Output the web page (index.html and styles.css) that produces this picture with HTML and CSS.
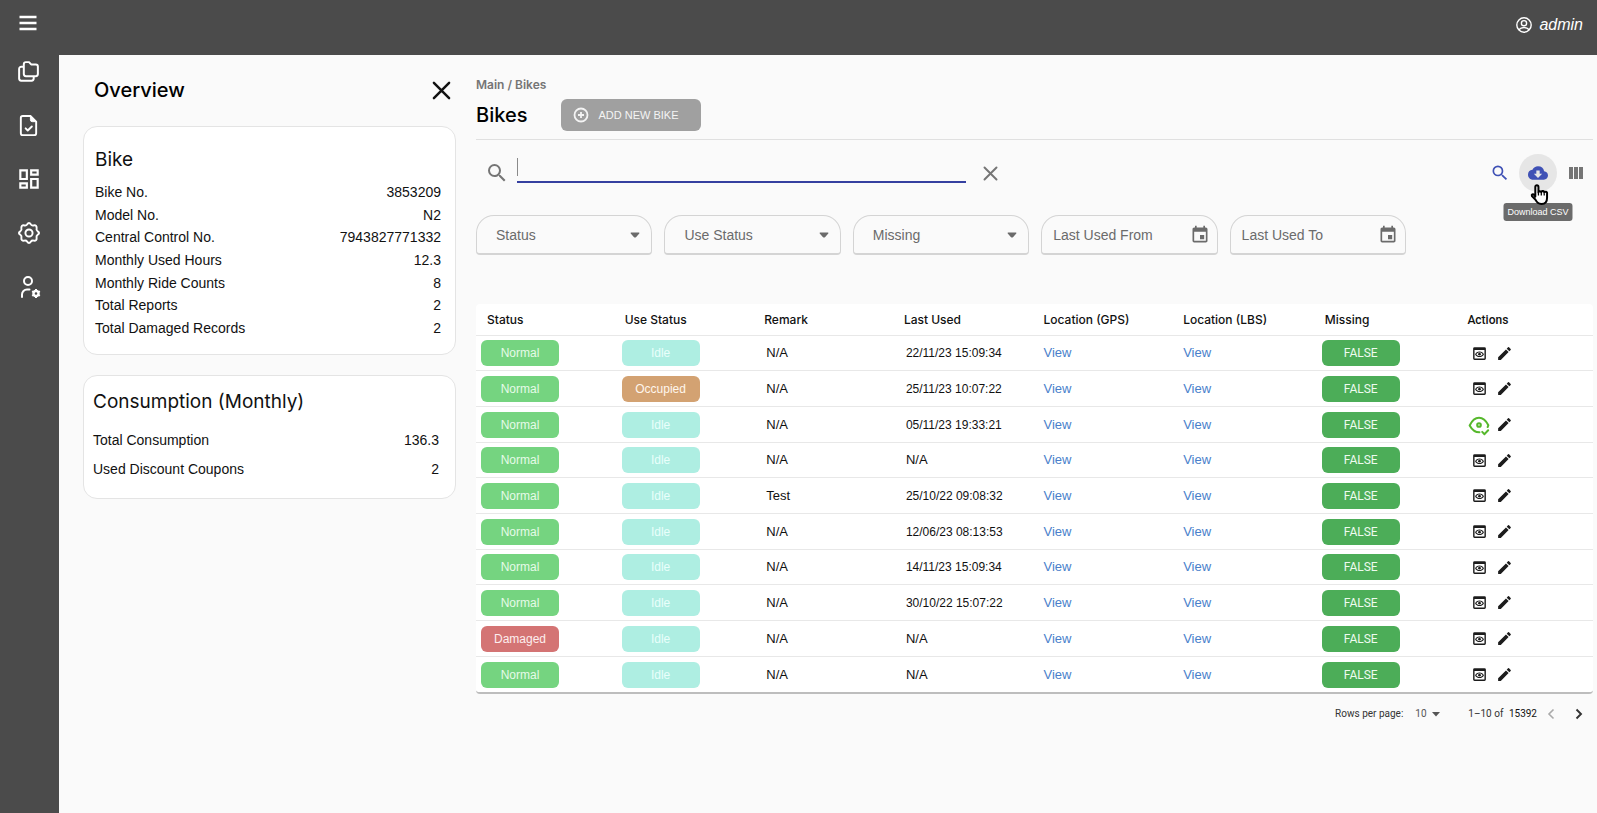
FILE: index.html
```html
<!DOCTYPE html>
<html lang="en">
<head>
<meta charset="utf-8">
<meta name="viewport" content="width=device-width, initial-scale=1">
<title>Bikes</title>
<link rel="stylesheet" href="styles.css">
</head>
<body>
<svg class="sprite" aria-hidden="true">
  <symbol id="i-close" viewBox="0 0 20 20"><path d="M2 2l16 16M18 2L2 18" fill="none" stroke="currentColor" stroke-width="2.6" stroke-linecap="round"/></symbol>
  <symbol id="i-search" viewBox="0 0 24 24"><path fill="currentColor" d="M15.5 14h-.79l-.28-.27A6.47 6.47 0 0 0 16 9.5 6.5 6.5 0 1 0 9.5 16c1.61 0 3.09-.59 4.23-1.57l.27.28v.79l5 4.99L20.49 19l-4.99-5zm-6 0C7.01 14 5 11.99 5 9.5S7.01 5 9.5 5 14 7.01 14 9.5 11.99 14 9.5 14z"/></symbol>
  <symbol id="i-drop" viewBox="0 0 10 6"><path fill="currentColor" d="M1.200 0.600h7.600q1 0 .5.900L6.200 4.900q-1.200 1-2.400 0L.7 1.500q-.5-.9.500-.9z"/></symbol>
  <symbol id="i-event" viewBox="0 0 24 24"><path fill="currentColor" d="M17 12h-5v5h5v-5zM16 1v2H8V1H6v2H5c-1.110 0-1.990.9-1.990 2L3 19a2 2 0 0 0 2 2h14c1.100 0 2-.9 2-2V5c0-1.100-.9-2-2-2h-1V1h-2zm3 18H5V8h14v11z"/></symbol>
  <symbol id="i-preview" viewBox="0 0 24 24"><path fill="currentColor" fill-rule="evenodd" d="M5 3h14a2 2 0 0 1 2 2v14a2 2 0 0 1-2 2H5a2 2 0 0 1-2-2V5a2 2 0 0 1 2-2zM5 7v12h14V7zM12 9c3 0 5.200 1.600 6.300 4-1.100 2.400-3.300 4-6.300 4s-5.200-1.600-6.300-4C6.800 10.600 9 9 12 9zm0 1.500c-2 0-3.500.9-4.500 2.500 1 1.600 2.500 2.500 4.500 2.500s3.500-.9 4.500-2.500c-1-1.600-2.500-2.500-4.500-2.500z"/><circle cx="12" cy="13" r="1.900" fill="currentColor"/></symbol>
  <symbol id="i-edit" viewBox="0 0 24 24"><path fill="currentColor" d="M3 17.250V21h3.750L17.810 9.940l-3.750-3.750L3 17.250zM20.710 7.040a1 1 0 0 0 0-1.410l-2.340-2.340a1 1 0 0 0-1.410 0l-1.830 1.830 3.750 3.750 1.830-1.830z"/></symbol>
  <symbol id="i-eye-check" viewBox="0 0 24 24"><g fill="none" stroke="currentColor" stroke-width="2.2" stroke-linecap="round" stroke-linejoin="round"><circle cx="12" cy="12" r="2"/><path d="M12.500 20c-4.200 0-8-2.600-10.700-7.500C4.300 7.200 7.800 4 12 4s7.700 3.200 10.200 8.200l-.8 2"/><path d="M15.500 19.500l2.500 2.500 4-4.300"/></g></symbol>
</svg>

<header class="topbar">
  <button class="icon-btn menu" aria-label="Menu"><svg width="18" height="16" viewBox="0 0 18 16"><path d="M.5 2h17M.5 8h17M.5 14h17" stroke="currentColor" stroke-width="2.600"/></svg></button>
  <a class="user" href="#">
    <svg width="16" height="16" viewBox="0 0 16 16" fill="none" stroke="currentColor" stroke-width="1.400"><circle cx="8" cy="8" r="7.200"/><circle cx="8" cy="6.200" r="2.600"/><path d="M2.800 12.800c1.400-1.600 3-2.300 5.200-2.300s3.800.7 5.200 2.300"/></svg>
    <span>admin</span>
  </a>
</header>

<div class="shell">
  <nav class="sidebar" aria-label="Main navigation">
    <a href="#" aria-label="Folders"><svg width="25" height="25" viewBox="0 0 24 24" fill="none" stroke="currentColor" stroke-width="1.900" stroke-linejoin="round"><path d="M9.500 3h3l2 2.200H19a2 2 0 0 1 2 2v7.300a2 2 0 0 1-2 2H9.500a2 2 0 0 1-2-2V5a2 2 0 0 1 2-2z"/><path d="M17 16.500v2.300a2 2 0 0 1-2 2H5a2 2 0 0 1-2-2V9.500a2 2 0 0 1 2-2h2.500"/></svg></a>
    <a href="#" aria-label="Reports"><svg width="23" height="23" viewBox="0 0 24 24" fill="none" stroke="currentColor" stroke-width="2" stroke-linejoin="round" stroke-linecap="round"><path d="M14 2H6a2 2 0 0 0-2 2v16a2 2 0 0 0 2 2h12a2 2 0 0 0 2-2V8z"/><path d="M14 2v4a2 2 0 0 0 2 2h4z" fill="currentColor" stroke-width="1"/><path d="M9 15l2.200 2.200L15.500 13"/></svg></a>
    <a href="#" aria-label="Dashboard"><svg width="26" height="26" viewBox="0 0 24 24" fill="currentColor"><path d="M19 5v2h-4V5h4M9 5v6H5V5h4m10 8v6h-4v-6h4M9 17v2H5v-2h4M21 3h-8v6h8V3zM11 3H3v10h8V3zm10 8h-8v10h8V11zm-10 4H3v6h8v-6z"/></svg></a>
    <a href="#" aria-label="Settings"><svg width="26" height="26" viewBox="0 0 24 24" fill="none" stroke="currentColor" stroke-width="1.800" stroke-linejoin="round"><path d="M10.200 4.200 Q12 1.200 13.800 4.200 Q14.600 5.400 16.200 5 Q19.500 4.500 19 7.800 Q18.600 9.400 19.800 10.200 Q22.800 12 19.800 13.800 Q18.600 14.600 19 16.200 Q19.500 19.500 16.200 19 Q14.600 18.600 13.800 19.800 Q12 22.800 10.200 19.800 Q9.400 18.600 7.800 19 Q4.500 19.500 5 16.200 Q5.400 14.600 4.200 13.800 Q1.200 12 4.200 10.200 Q5.400 9.400 5 7.800 Q4.500 4.500 7.800 5 Q9.400 5.400 10.200 4.200z"/><circle cx="12" cy="12" r="3.300"/></svg></a>
    <a href="#" aria-label="User management"><svg width="24" height="24" viewBox="0 0 24 24" fill="none" stroke="currentColor" stroke-width="2"><circle cx="11" cy="6" r="4"/><path d="M5 22v-2.500a5 5 0 0 1 5-5h2.500" stroke-linecap="round"/><circle cx="19" cy="18.500" r="2.500" stroke-width="2.400"/><path d="M19 14v2M19 21v2M15.100 16.250l1.800 1M21.100 19.750l1.800 1M15.100 20.750l1.800-1M21.100 17.250l1.800-1"/></svg></a>
  </nav>

  <aside class="overview">
    <div class="overview-head">
      <h2>Overview</h2>
      <button class="icon-btn" aria-label="Close overview"><svg width="19" height="19"><use href="#i-close"/></svg></button>
    </div>
    <section class="card">
      <h3>Bike</h3>
      <dl class="facts facts-bike">
        <div><dt>Bike No.</dt><dd>3853209</dd></div>
        <div><dt>Model No.</dt><dd>N2</dd></div>
        <div><dt>Central Control No.</dt><dd>7943827771332</dd></div>
        <div><dt>Monthly Used Hours</dt><dd>12.3</dd></div>
        <div><dt>Monthly Ride Counts</dt><dd>8</dd></div>
        <div><dt>Total Reports</dt><dd>2</dd></div>
        <div><dt>Total Damaged Records</dt><dd>2</dd></div>
      </dl>
    </section>
    <section class="card card-consumption">
      <h3>Consumption (Monthly)</h3>
      <dl class="facts facts-wide">
        <div><dt>Total Consumption</dt><dd>136.3</dd></div>
        <div><dt>Used Discount Coupons</dt><dd>2</dd></div>
      </dl>
    </section>
  </aside>

  <main class="main">
    <nav class="crumbs" aria-label="Breadcrumb"><a href="#">Main</a> / <a href="#">Bikes</a></nav>
    <div class="title-row">
      <h1>Bikes</h1>
      <button class="add-btn"><svg width="16" height="16" viewBox="0 0 16 16" fill="none" stroke="currentColor"><circle cx="8" cy="8" r="6.500" stroke-width="1.800"/><path d="M8 5v6M5 8h6" stroke-width="1.800"/></svg>ADD NEW BIKE</button>
    </div>

    <div class="toolbar">
      <form class="search" role="search">
        <svg class="muted" width="24" height="24" aria-hidden="true"><use href="#i-search"/></svg>
        <span class="search-field"><input type="text" aria-label="Search bikes"></span>
        <button class="icon-btn muted" type="button" aria-label="Clear search"><svg width="15" height="15"><use href="#i-close"/></svg></button>
      </form>
      <div class="tools">
        <button class="tool tool-blue" aria-label="Search"><svg width="20" height="20"><use href="#i-search"/></svg></button>
        <span class="tip-anchor">
          <button class="tool tool-blue tool-hover" aria-label="Download" aria-describedby="tip"><svg width="20" height="20" viewBox="0 0 24 24"><path fill="currentColor" d="M19.350 10.040A7.490 7.490 0 0 0 12 4C9.110 4 6.600 5.640 5.350 8.040A5.994 5.994 0 0 0 0 14c0 3.310 2.690 6 6 6h13c2.760 0 5-2.240 5-5 0-2.640-2.050-4.780-4.650-4.960zM17 13l-5 5-5-5h3V9h4v4h3z"/></svg></button>
          <span class="tip" id="tip" role="tooltip">Download CSV</span>
          <svg class="pointer" width="19" height="21" viewBox="0 0 18 20" aria-hidden="true"><path fill="#fff" stroke="#000" stroke-width="1.900" stroke-linejoin="round" d="M5 12V2.800a1.500 1.500 0 0 1 3 0V8a1.400 1.400 0 0 1 2.700-.2 1.400 1.400 0 0 1 2.800.6 1.400 1.400 0 0 1 2.700.8V13c0 3.500-1.600 6-5.200 6-3.400 0-4.400-1.600-6-4.200L1.800 11.500c-.7-1.400 1-2.500 2-1.200z"/><path d="M8 8v3M10.700 8v3M13.500 9v2" stroke="#000" stroke-width="1.200"/></svg>
        </span>
        <button class="tool muted" aria-label="View columns"><svg width="14" height="12" viewBox="0 0 14 12" fill="currentColor"><path d="M0 0h4v12H0zM5 0h4v12H5zM10 0h4v12h-4z"/></svg></button>
      </div>
    </div>

    <div class="filters">
      <label class="field"><select aria-label="Status"><option>Status</option></select><svg width="10" height="6"><use href="#i-drop"/></svg></label>
      <label class="field"><select aria-label="Use Status"><option>Use Status</option></select><svg width="10" height="6"><use href="#i-drop"/></svg></label>
      <label class="field"><select aria-label="Missing"><option>Missing</option></select><svg width="10" height="6"><use href="#i-drop"/></svg></label>
      <label class="field field-date"><input type="text" placeholder="Last Used From" aria-label="Last Used From"><svg width="20" height="20"><use href="#i-event"/></svg></label>
      <label class="field field-date"><input type="text" placeholder="Last Used To" aria-label="Last Used To"><svg width="20" height="20"><use href="#i-event"/></svg></label>
    </div>

    <table class="bikes">
      <thead><tr><th class="th-wide">Status</th><th>Use Status</th><th>Remark</th><th>Last Used</th><th>Location (GPS)</th><th>Location (LBS)</th><th class="th-wide">Missing</th><th class="th-actions">Actions</th></tr></thead>
      <tbody id="rows"></tbody>
    </table>

    <div class="pager">
      <label class="per-page">Rows per page: <span class="per-page-box"><select><option>10</option></select><svg width="8" height="5" viewBox="0 0 8 5"><path d="M0 0h8L4 4.500z" fill="currentColor"/></svg></span></label>
      <span class="range">1–10 of <span>15392</span></span>
      <span class="pages">
        <button class="icon-btn" disabled aria-label="Previous page"><svg width="8" height="12" viewBox="0 0 8 12"><path d="M6.500 1.500L2 6l4.500 4.500" fill="none" stroke="currentColor" stroke-width="1.600"/></svg></button>
        <button class="icon-btn" aria-label="Next page"><svg width="8" height="12" viewBox="0 0 8 12"><path d="M1.500 1.500L6 6l-4.500 4.500" fill="none" stroke="currentColor" stroke-width="1.900"/></svg></button>
      </span>
    </div>
  </main>
</div>
<script src="app.js"></script>
</body>
</html>
```
FILE: styles.css
```css
* { box-sizing: border-box; }

body {
  margin: 0;
  min-height: 100vh;
  display: flex;
  flex-direction: column;
  background: #fafafa;
  color: #111;
  font: 14px/20px "Liberation Sans", Arial, sans-serif;
}

h1, h2, h3, dl, dd { margin: 0; font-weight: 400; }
h1, h2, h3 { font-family: Inter, "Liberation Sans", sans-serif; }
a { color: inherit; text-decoration: none; }
svg { display: block; flex: none; }
button, input, select { font: inherit; color: inherit; }
.sprite { position: absolute; width: 0; height: 0; }
.muted { color: #757575; }

.icon-btn {
  display: flex;
  padding: 0;
  border: 0;
  background: none;
}

/* Top bar */
.topbar {
  display: flex;
  justify-content: space-between;
  align-items: flex-start;
  height: 55px;
  padding: 15px 14px 0 19px;
  background: #4b4b4b;
  color: #fff;
}
.user {
  display: flex;
  align-items: center;
  gap: 7px;
  font-size: 16px;
  font-style: italic;
}

/* Layout */
.shell {
  flex: 1;
  display: grid;
  grid-template-columns: 59px 397px minmax(0, 1fr);
}
.sidebar {
  display: flex;
  flex-direction: column;
  gap: 22px;
  padding-right: 2px;
  background: #4b4b4b;
  color: #fff;
}
.sidebar a {
  display: flex;
  align-items: center;
  justify-content: center;
  height: 32px;
}

/* Overview panel */
.overview { padding-left: 24px; }
.overview-head {
  display: flex;
  align-items: center;
  justify-content: space-between;
  padding: 23px 5px 24px 11px;
}
.overview-head h2 {
  font-size: 20px;
  line-height: 24px;
  font-weight: 500;
  color: #000;
}
.card {
  padding: 21px 14px 15px 11px;
  border: 1px solid #e4e4e4;
  border-radius: 14px;
  background: #fff;
}
.card h3 { font-size: 19px; line-height: 24px; }
.facts { display: grid; }
.facts div { display: flex; justify-content: space-between; }
.facts-bike {
  align-content: space-between;
  min-height: 158px;
  margin-top: 9px;
  line-height: 22px;
}
.card-consumption {
  margin-top: 20px;
  padding: 14px 16px 17px 9px;
}
.facts-wide {
  gap: 8px;
  margin-top: 16px;
  padding-bottom: 1px;
  line-height: 21px;
}

/* Main column */
.main { padding: 20px 4px 0 20px; }
.crumbs {
  font: 600 12px/20px Inter, "Liberation Sans", sans-serif;
  color: #757575;
}
.title-row {
  display: flex;
  align-items: center;
  gap: 34px;
  padding: 4px 0 8px;
  border-bottom: 1px solid #e0e0e0;
}
h1 {
  font-size: 20px;
  font-weight: 500;
  color: #000;
}
.add-btn {
  display: flex;
  align-items: center;
  gap: 9px;
  height: 32px;
  padding: 0 22px 0 12px;
  border: 0;
  border-radius: 6px;
  background: #a0a0a0;
  color: #f4f4f4;
  font-size: 11px;
}

/* Search and tools */
.toolbar {
  display: flex;
  align-items: center;
  justify-content: space-between;
  height: 66px;
}
.search {
  display: flex;
  align-items: center;
  width: 522px;
  padding-left: 9px;
}
.search-field {
  position: relative;
  flex: 1;
  margin: 0 17px 10px 8px;
}
.search-field::before {
  content: "";
  position: absolute;
  left: 0;
  top: 5px;
  width: 1px;
  height: 18px;
  background: #8a8a8a;
}
.search-field input {
  display: block;
  width: 100%;
  height: 30px;
  padding: 0 4px;
  border: 0;
  border-bottom: 2px solid #3540a0;
  background: none;
  outline: 0;
}
.tools { display: flex; align-items: center; padding-right: 4px; }
.tool {
  display: flex;
  align-items: center;
  justify-content: center;
  width: 38px;
  height: 38px;
  padding: 0;
  border: 0;
  border-radius: 50%;
  background: none;
}
.tools > .tool:last-child { width: 26px; margin-left: 6px; }
.tool-blue { color: #3f51b5; }
.tool-hover { background: #e6e6e6; }
.tip-anchor { position: relative; }
.tip {
  position: absolute;
  top: 49px;
  left: 50%;
  transform: translateX(-50%);
  padding: 0 4px;
  border-radius: 3px;
  background: #6b6b6b;
  color: #fff;
  font-size: 9px;
  line-height: 18px;
  white-space: nowrap;
}
.pointer { position: absolute; top: 30px; left: 11px; }

/* Filters */
.filters {
  display: grid;
  grid-template-columns: repeat(5, minmax(0, 1fr));
  gap: 12px;
  max-width: 930px;
  padding-top: 9px;
  color: #6b6b6b;
}
.field {
  display: flex;
  align-items: center;
  height: 40px;
  padding: 0 11px 0 19px;
  border: 1px solid #d4d4d4;
  border-bottom-width: 2px;
  border-radius: 18px 18px 4px 4px;
}
.field-date { padding: 0 7px 0 11px; }
.field select,
.field input {
  flex: 1;
  min-width: 0;
  padding: 0;
  border: 0;
  background: none;
  appearance: none;
}
.field input::placeholder { color: inherit; opacity: 1; }

/* Table */
.bikes {
  width: 100%;
  margin-top: 49px;
  border-collapse: separate;
  border-spacing: 0;
  table-layout: fixed;
  background: #fff;
  border-bottom: 2px solid #bdbdbd;
  border-radius: 4px;
  font-size: 13px;
}
.bikes th {
  height: 32px;
  padding: 0 0 0 9px;
  border-bottom: 1px solid #e8e8e8;
  text-align: left;
  font: 500 12px/20px Inter, "Liberation Sans", sans-serif;
}
.bikes .th-wide { padding-left: 11px; }
.bikes .th-actions {
  padding-left: 14px;
  font-family: Roboto, sans-serif;
}
.bikes td {
  height: 36px;
  padding: 0 0 0 11px;
  border-bottom: 1px solid #e8e8e8;
}
.bikes tr:nth-child(3n + 1) td { height: 35px; }
.bikes tr:last-child td { border-bottom: 0; }
.bikes .cell-pill { padding-left: 6px; }
.bikes .cell-pill:first-child { padding-left: 5px; }
.bikes .cell-missing { padding-left: 8px; }
.bikes time { font-size: 12px; }
.bikes .cell-link { padding-left: 9px; }
.bikes .cell-actions { padding-left: 14px; }
.pill {
  display: block;
  width: 78px;
  border-radius: 6px;
  color: #fff;
  font-size: 12px;
  line-height: 26px;
  text-align: center;
}
.pill-normal { background: #75d480; color: #e6fbe8; }
.pill-damaged { background: #d47474; color: #fdeeee; }
.pill-idle { background: #aeeee2; color: #e9fffb; }
.pill-occupied { background: #d3a272; color: #fff6ec; }
.pill-false {
  background: #4cad58;
  color: #eefbef;
  font-family: Roboto, sans-serif;
}
.view-link { color: #4a7fcb; }
.row-actions { display: flex; gap: 1px; color: #1c1c1c; }
.row-actions button {
  display: flex;
  align-items: center;
  justify-content: center;
  width: 24px;
  height: 24px;
  padding: 0;
  border: 0;
  background: none;
}
.row-actions .seen { color: #56b82c; }

/* Pager */
.pager {
  display: flex;
  align-items: center;
  justify-content: flex-end;
  height: 40px;
  padding-right: 10px;
  color: #333;
  font: 10px/20px Roboto, sans-serif;
}
.per-page { display: flex; align-items: center; gap: 12px; }
.per-page-box { display: flex; align-items: center; gap: 5px; color: #555; }
.per-page select {
  padding: 0;
  border: 0;
  background: none;
  appearance: none;
}
.range { margin-left: 28px; }
.range span { margin-left: 3px; color: #111; }
.pages { display: flex; gap: 20px; margin-left: 10px; }
.pages button:disabled { color: #aaa; }
```
FILE: app.js
```js
const rows = [
  ["Normal", "Idle", "N/A", "22/11/23 15:09:34"],
  ["Normal", "Occupied", "N/A", "25/11/23 10:07:22"],
  ["Normal", "Idle", "N/A", "05/11/23 19:33:21", true],
  ["Normal", "Idle", "N/A", null],
  ["Normal", "Idle", "Test", "25/10/22 09:08:32"],
  ["Normal", "Idle", "N/A", "12/06/23 08:13:53"],
  ["Normal", "Idle", "N/A", "14/11/23 15:09:34"],
  ["Normal", "Idle", "N/A", "30/10/22 15:07:22"],
  ["Damaged", "Idle", "N/A", null],
  ["Normal", "Idle", "N/A", null]
];

const pill = (text, extra = "") =>
  `<td class="cell-pill ${extra}"><span class="pill pill-${text.toLowerCase()}">${text}</span></td>`;
const link = '<td class="cell-link"><a class="view-link" href="#">View</a></td>';
const icon = (id, size) =>
  `<svg width="${size}" height="${size}"><use href="#${id}"/></svg>`;

document.getElementById("rows").innerHTML = rows
  .map(([status, use, remark, last, seen]) => `<tr>
    ${pill(status)}${pill(use)}<td>${remark}</td><td>${last ? `<time>${last}</time>` : "N/A"}</td>${link}${link}${pill("FALSE", "cell-missing")}
    <td class="cell-actions"><div class="row-actions">
      <button class="${seen ? "seen" : "preview"}" aria-label="Preview">${seen ? icon("i-eye-check", 22) : icon("i-preview", 17)}</button>
      <button aria-label="Edit">${icon("i-edit", 17)}</button>
    </div></td>
  </tr>`)
  .join("");
```
